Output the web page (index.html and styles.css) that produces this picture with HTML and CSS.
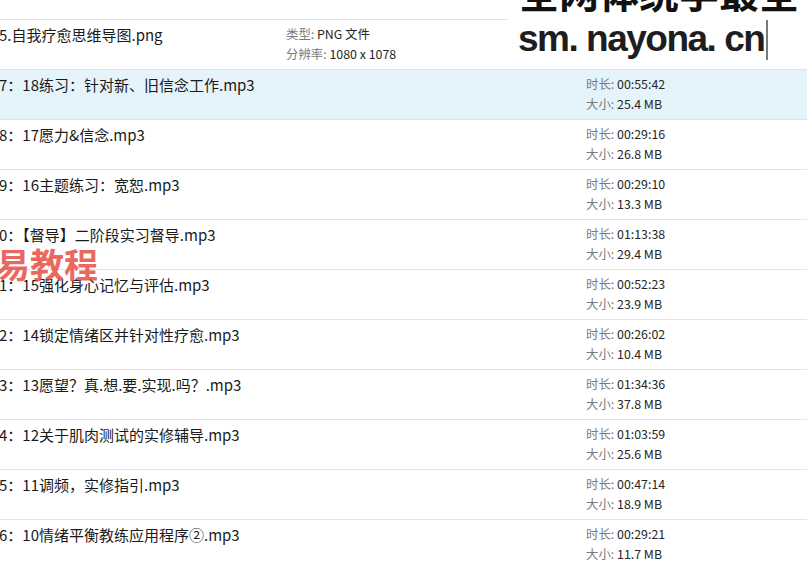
FILE: index.html
```html
<!DOCTYPE html>
<html lang="zh-CN">
<head>
<meta charset="utf-8">
<title>文件列表</title>
<link rel="stylesheet" href="styles.css">
</head>
<body>
<div class="view">
  <div class="list">
    <div class="row">
      <div class="name">5.自我疗愈思维导图.png</div>
      <div class="meta meta-img">
        <div><span class="k">类型:</span> PNG 文件</div>
        <div><span class="k">分辨率:</span> 1080 x 1078</div>
      </div>
    </div>
    <div class="row sel">
      <div class="name">7：18练习：针对新、旧信念工作.mp3</div>
      <div class="meta">
        <div><span class="k">时长:</span> 00:55:42</div>
        <div><span class="k">大小:</span> 25.4 MB</div>
      </div>
    </div>
    <div class="row">
      <div class="name">8：17愿力&amp;信念.mp3</div>
      <div class="meta">
        <div><span class="k">时长:</span> 00:29:16</div>
        <div><span class="k">大小:</span> 26.8 MB</div>
      </div>
    </div>
    <div class="row">
      <div class="name">9：16主题练习：宽恕.mp3</div>
      <div class="meta">
        <div><span class="k">时长:</span> 00:29:10</div>
        <div><span class="k">大小:</span> 13.3 MB</div>
      </div>
    </div>
    <div class="row">
      <div class="name">0：【督导】二阶段实习督导.mp3</div>
      <div class="meta">
        <div><span class="k">时长:</span> 01:13:38</div>
        <div><span class="k">大小:</span> 29.4 MB</div>
      </div>
    </div>
    <div class="row">
      <div class="name">1：15强化身心记忆与评估.mp3</div>
      <div class="meta">
        <div><span class="k">时长:</span> 00:52:23</div>
        <div><span class="k">大小:</span> 23.9 MB</div>
      </div>
    </div>
    <div class="row">
      <div class="name">2：14锁定情绪区并针对性疗愈.mp3</div>
      <div class="meta">
        <div><span class="k">时长:</span> 00:26:02</div>
        <div><span class="k">大小:</span> 10.4 MB</div>
      </div>
    </div>
    <div class="row">
      <div class="name">3：13愿望？真.想.要.实现.吗？.mp3</div>
      <div class="meta">
        <div><span class="k">时长:</span> 01:34:36</div>
        <div><span class="k">大小:</span> 37.8 MB</div>
      </div>
    </div>
    <div class="row">
      <div class="name">4：12关于肌肉测试的实修辅导.mp3</div>
      <div class="meta">
        <div><span class="k">时长:</span> 01:03:59</div>
        <div><span class="k">大小:</span> 25.6 MB</div>
      </div>
    </div>
    <div class="row">
      <div class="name">5：11调频，实修指引.mp3</div>
      <div class="meta">
        <div><span class="k">时长:</span> 00:47:14</div>
        <div><span class="k">大小:</span> 18.9 MB</div>
      </div>
    </div>
    <div class="row">
      <div class="name">6：10情绪平衡教练应用程序②.mp3</div>
      <div class="meta">
        <div><span class="k">时长:</span> 00:29:21</div>
        <div><span class="k">大小:</span> 11.7 MB</div>
      </div>
    </div>
  </div>

  <div class="wm-box">
    <div class="wm-top">全网体统学最全</div>
    <div class="wm-url">sm. nayona. cn<span class="caret"></span></div>
  </div>
  <div class="wm-red">易教程</div>
</div>
</body>
</html>
```

FILE: styles.css
```css
* { box-sizing: border-box; }
html, body {
  margin: 0;
  padding: 0;
  background: #ffffff;
}
body {
  font-family: "Noto Sans CJK SC", "Microsoft YaHei", sans-serif;
  color: #1c1c1c;
  overflow: hidden;
}
.view {
  position: relative;
  width: 807px;
  height: 564px;
  overflow: hidden;
}
.list {
  display: flex;
  flex-direction: column;
  padding-top: 19px;
}
.row {
  height: 50px;
  border-top: 1px solid #e3e3e3;
  display: flex;
  align-items: flex-start;
}
.row.sel {
  background: #e5f3fb;
  border-top-color: #d2e5f1;
}
.row.sel + .row {
  border-top-color: #d2e5f1;
}
.name {
  width: 587px;
  flex: none;
  margin-left: -1px;
  padding-top: 5px;
  font-size: 15px;
  line-height: 20px;
  white-space: nowrap;
  color: #1a1a1a;
}
.meta {
  padding-top: 5px;
  font-size: 12.4px;
  line-height: 19.5px;
  color: #262626;
  white-space: nowrap;
}
.row:first-child .name {
  width: 287px;
}
.k {
  color: #7a7a7a;
}
.wm-box {
  position: absolute;
  top: 0;
  right: 0;
  width: 300px;
  height: 69px;
  background: #ffffff;
  overflow: hidden;
  color: #111111;
}
.wm-top {
  position: absolute;
  left: 12px;
  top: -29px;
  font-size: 40px;
  line-height: 40px;
  font-weight: 700;
  white-space: nowrap;
  font-family: "Noto Sans CJK SC", sans-serif;
}
.wm-url {
  position: absolute;
  left: 11px;
  top: 18px;
  font-family: "Liberation Sans", Arial, sans-serif;
  font-weight: bold;
  font-size: 37px;
  line-height: 42px;
  letter-spacing: -1.5px;
  white-space: nowrap;
  color: #1e1e1e;
}
.caret {
  display: inline-block;
  width: 2px;
  height: 40px;
  background: #7a7a7a;
  vertical-align: -9px;
  margin-left: 2px;
}
.wm-red {
  position: absolute;
  left: -4px;
  top: 244px;
  font-family: "Noto Sans CJK SC", sans-serif;
  font-weight: 700;
  font-size: 34px;
  line-height: 40px;
  color: rgba(230, 70, 60, 0.82);
  white-space: nowrap;
}
```
